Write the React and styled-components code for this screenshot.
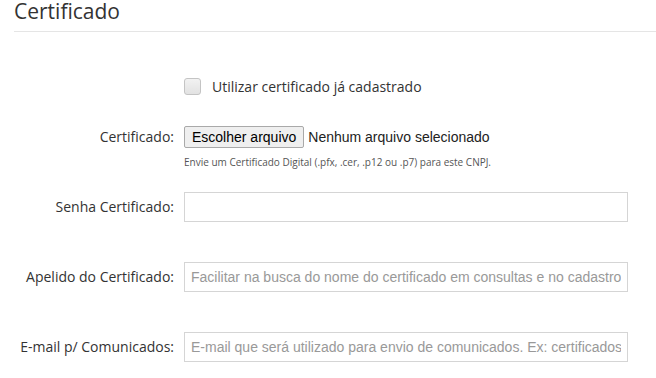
import React from "react";
import styled, { createGlobalStyle } from "styled-components";

const GlobalStyle = createGlobalStyle`
  body {
    margin: 0;
    background: #fff;
    font-family: "Open Sans", "Liberation Sans", sans-serif;
    color: #333;
  }
`;

const Page = styled.div`
  padding-left: 14px;
  width: 642px;
  height: 378px;
  overflow: hidden;
`;

const Title = styled.h3`
  margin: 0;
  font-size: 21px;
  font-weight: 400;
  line-height: 22px;
  color: #333;
  padding-bottom: 9px;
  border-bottom: 1px solid #e5e5e5;
`;

const Form = styled.div`
  display: flex;
  flex-direction: column;
  padding-top: 46px;
`;

const Row = styled.div`
  display: grid;
  grid-template-columns: 160px 444px;
  column-gap: 10px;
  align-items: ${(p) => p.align || "center"};
  margin-bottom: ${(p) => p.mb || 0}px;
`;

const Label = styled.label`
  text-align: right;
  font-size: 14px;
  color: #333;
  line-height: ${(p) => p.lh || 18}px;
`;

const CheckLine = styled.label`
  display: flex;
  align-items: center;
  gap: 11px;
  font-size: 14px;
  color: #333;
  height: 17px;
`;

const Box = styled.span`
  width: 15px;
  height: 15px;
  border: 1px solid #c4c4c4;
  border-radius: 3px;
  background: linear-gradient(#f2f2f2, #e2e2e2);
`;

const FileLine = styled.div`
  display: flex;
  align-items: center;
  gap: 4px;
  font-family: "Liberation Sans", Arial, sans-serif;
  font-size: 14px;
  color: #222;
`;

const FileButton = styled.button`
  height: 22px;
  padding: 0 7px;
  font-family: "Liberation Sans", Arial, sans-serif;
  font-size: 14px;
  color: #000;
  background: #efefef;
  border: 1px solid #a9a9a9;
  border-radius: 2px;
`;

const Help = styled.div`
  font-size: 10px;
  color: #555;
  margin-top: 7px;
  line-height: 14px;
`;

const Input = styled.input`
  box-sizing: border-box;
  width: 444px;
  height: 30px;
  padding: 0 6px;
  border: 1px solid #d5d5d5;
  font-family: "Liberation Sans", Arial, sans-serif;
  font-size: 14px;
  color: #333;
  outline: none;
  &::placeholder {
    color: #999;
  }
`;

export default function App() {
  return (
    <Page>
      <GlobalStyle />
      <Title>Certificado</Title>
      <Form>
        <Row mb={31}>
          <span />
          <CheckLine>
            <Box />
            Utilizar certificado já cadastrado
          </CheckLine>
        </Row>
        <Row mb={23} align="start">
          <Label lh={22}>Certificado:</Label>
          <div>
            <FileLine>
              <FileButton>Escolher arquivo</FileButton>
              <span>Nenhum arquivo selecionado</span>
            </FileLine>
            <Help>
              Envie um Certificado Digital (.pfx, .cer, .p12 ou .p7) para este
              CNPJ.
            </Help>
          </div>
        </Row>
        <Row mb={40}>
          <Label>Senha Certificado:</Label>
          <Input type="password" />
        </Row>
        <Row mb={40}>
          <Label>Apelido do Certificado:</Label>
          <Input placeholder="Facilitar na busca do nome do certificado em consultas e no cadastro" />
        </Row>
        <Row>
          <Label>E-mail p/ Comunicados:</Label>
          <Input placeholder="E-mail que será utilizado para envio de comunicados. Ex: certificados" />
        </Row>
      </Form>
    </Page>
  );
}
